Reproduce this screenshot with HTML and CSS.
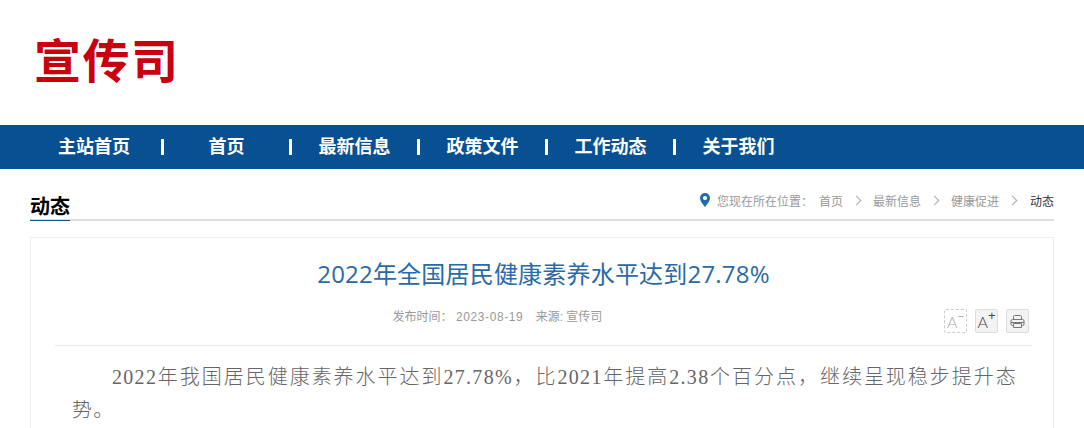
FILE: index.html
```html
<!doctype html>
<html lang="zh-CN">
  <head>
    <meta charset="UTF-8" />
    <meta name="viewport" content="width=device-width, initial-scale=1.0" />
    <title>2022年全国居民健康素养水平达到27.78%</title>
    <link rel="stylesheet" href="styles.css">
  </head>
  <body>
    <div class="header">
      <div class="logo">宣传司</div>
    </div>
    <div class="nav">
      <a href="#" class="nav-item first">主站首页</a>
      <a href="#" class="nav-item">首页</a>
      <a href="#" class="nav-item">最新信息</a>
      <a href="#" class="nav-item">政策文件</a>
      <a href="#" class="nav-item">工作动态</a>
      <a href="#" class="nav-item last">关于我们</a>
    </div>
    <div class="main">
      <div class="crumb-bar">
        <div class="section-title">动态</div>
        <div class="crumbs">
          <svg class="pin" width="10" height="14" viewBox="0 0 10 14">
            <path fill="#1f6cab" fill-rule="evenodd" d="M5 0a5 5 0 0 1 5 5c0 3-3 6.500-5 9-2-2.500-5-6-5-9a5 5 0 0 1 5-5zm0 2.900a2.100 2.100 0 1 0 0 4.200 2.100 2.100 0 0 0 0-4.200z" />
          </svg>
          <span class="here">您现在所在位置：</span>
          <a href="#">首页</a>
          <i class="arrow"></i>
          <a href="#">最新信息</a>
          <i class="arrow"></i>
          <a href="#">健康促进</a>
          <i class="arrow"></i>
          <span class="current">动态</span>
        </div>
      </div>
      <div class="article">
        <h1 class="art-title">2022年全国居民健康素养水平达到27.78%</h1>
        <div class="meta-row">
          <div class="meta">
            <span>发布时间：</span>
            <span class="date">2023-08-19</span>
            <span class="source">来源: 宣传司</span>
          </div>
          <div class="tools">
            <div class="tool minus">
              <span class="tool-a">A</span><sup>−</sup>
            </div>
            <div class="tool">
              <span class="tool-a dark">A</span><sup class="dark">+</sup>
            </div>
            <div class="tool">
              <svg width="15" height="15" viewBox="0 0 15 15" fill="none" stroke="#777" stroke-width="1">
                <path d="M3.500 5.500V2.500a1 1 0 0 1 1-1h6a1 1 0 0 1 1 1v3" />
                <path d="M3.500 11.500H2.500a1.500 1.500 0 0 1-1.500-1.500V7a1.500 1.500 0 0 1 1.500-1.500h10A1.500 1.500 0 0 1 14 7v3a1.500 1.500 0 0 1-1.500 1.500h-1" />
                <path d="M1 8.500h13" />
                <path d="M3.500 9.500h8v4h-8z" />
              </svg>
            </div>
          </div>
        </div>
        <div class="content">
          <p>2022年我国居民健康素养水平达到27.78%，比2021年提高2.38个百分点，继续呈现稳步提升态势。</p>
        </div>
      </div>
    </div>
  </body>
</html>
```

FILE: styles.css
```css
* {
  padding: 0;
  margin: 0;
  box-sizing: border-box;
}
body {
  background-color: #fff;
  font-family: "Liberation Sans", "Noto Sans CJK SC", sans-serif;
}
a {
  text-decoration: none;
  color: inherit;
}
.header {
  height: 125px;
  padding: 31px 0 0 34px;
}
.logo {
  font-size: 47px;
  line-height: 62px;
  font-weight: bold;
  color: #c9000f;
  letter-spacing: 1.500px;
}
.nav {
  height: 44px;
  background-color: #095092;
  display: flex;
  align-items: center;
  padding-left: 36px;
}
.nav-item {
  width: 128px;
  height: 16px;
  line-height: 16px;
  font-size: 18px;
  font-weight: bold;
  color: #fff;
  text-align: center;
  border-right: 3px solid #fff;
}
.nav-item.first {
  padding-right: 9px;
}
.nav-item.last {
  border-right: 0;
  padding-right: 3px;
}
.main {
  padding: 0 30px;
}
.crumb-bar {
  height: 52px;
  display: flex;
  justify-content: space-between;
  align-items: flex-end;
  border-bottom: 2px solid #ddd;
}
.section-title {
  width: 40px;
  height: 26px;
  margin-bottom: -2px;
  font-size: 20px;
  line-height: 24px;
  font-weight: bold;
  color: #000;
  border-bottom: 1px solid #095092;
  white-space: nowrap;
}
.crumbs {
  display: flex;
  align-items: center;
  height: 24px;
  margin-bottom: 7px;
  font-size: 12px;
  color: #999;
}
.pin {
  margin-right: 7px;
}
.here {
  margin-right: 6px;
}
.arrow {
  width: 7px;
  height: 7px;
  margin: 0 13px 0 10px;
  border-top: 1px solid #aaa;
  border-right: 1px solid #aaa;
  transform: rotate(45deg);
}
.current {
  margin-left: 1px;
  color: #333;
}
.article {
  margin-top: 16px;
  border: 1px solid #eee;
  padding: 0 21px 40px 24px;
}
.art-title {
  margin-top: 18px;
  font-family: "Open Sans", "Noto Sans CJK SC", sans-serif;
  font-size: 24px;
  line-height: 36px;
  font-weight: normal;
  letter-spacing: 0.200px;
  color: #2a6aa6;
  text-align: center;
}
.meta-row {
  display: flex;
  height: 39px;
  margin-top: 15px;
  border-bottom: 1px solid #e8e8e8;
}
.meta {
  flex: 1;
  font-size: 12px;
  line-height: 18px;
  color: #999;
  text-align: center;
  padding-top: 1px;
}
.date {
  margin-right: 9px;
  letter-spacing: 0.600px;
}
.tools {
  width: 92px;
  display: flex;
  gap: 8px;
  padding: 2px 0 0 4px;
}
.tool {
  width: 23px;
  height: 24px;
  display: flex;
  align-items: center;
  justify-content: center;
  background-color: #f3f3f3;
  border: 1px solid #ddd;
  border-radius: 2px;
}
.tool.minus {
  background-color: #fff;
  border: 1px dashed #ccc;
}
.tool-a {
  font-family: "Lato", "Liberation Sans", sans-serif;
  font-size: 16px;
  font-weight: 300;
  line-height: 17px;
  color: #aaa;
}
.tool sup {
  font-size: 11px;
  line-height: 10px;
  color: #aaa;
  align-self: flex-start;
  margin-top: 1px;
}
.tool sup.dark {
  font-size: 13px;
}
.tool .dark {
  color: #444;
}
.content {
  padding: 15px 15px 0 17px;
}
.content p {
  font-family: "Liberation Serif", "Noto Sans CJK SC", serif;
  font-size: 20px;
  font-weight: 300;
  line-height: 33px;
  letter-spacing: 1.300px;
  color: #666;
  text-indent: 40px;
  text-align: justify;
}
```
